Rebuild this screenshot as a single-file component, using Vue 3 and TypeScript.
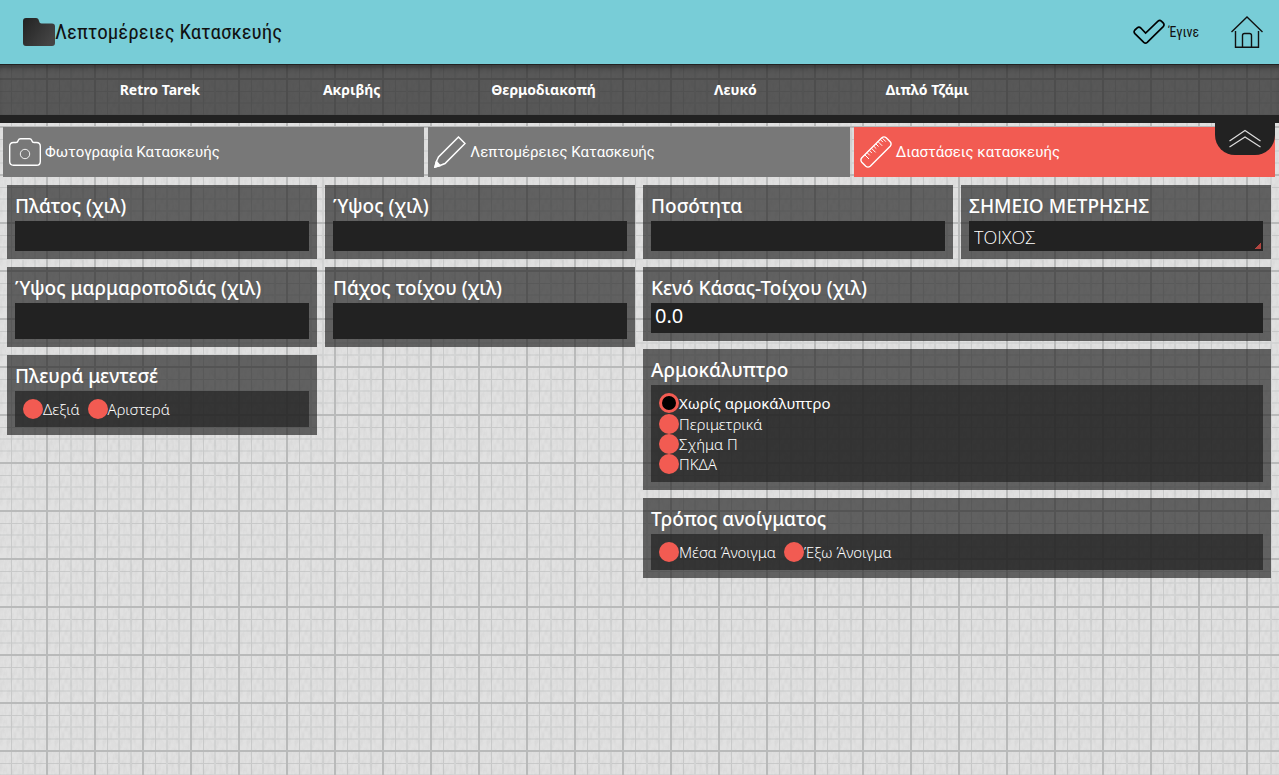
<script setup lang="ts">
import { ref } from 'vue'

const summary: string[] = ['Retro Tarek', 'Ακριβής', 'Θερμοδιακοπή', 'Λευκό', 'Διπλό Τζάμι']
const width = ref('')
const height = ref('')
const sillHeight = ref('')
const wallThickness = ref('')
const quantity = ref('')
const gap = ref('0.0')
const measurePoint = ref('ΤΟΙΧΟΣ')
const hinge = ref('')
const cover = ref('Χωρίς αρμοκάλυπτρο')
const opening = ref('')
const hinges: string[] = ['Δεξιά', 'Αριστερά']
const covers: string[] = ['Χωρίς αρμοκάλυπτρο', 'Περιμετρικά', 'Σχήμα Π', 'ΠΚΔΑ']
const openings: string[] = ['Μέσα Άνοιγμα', 'Έξω Άνοιγμα']
</script>

<template>
  <div class="page">
    <header class="top">
      <svg class="folder" width="32" height="28" viewBox="0 0 32 28" aria-hidden="true">
        <defs>
          <linearGradient id="folderFill" x1="0" y1="0" x2="1" y2="0.6">
            <stop offset="0" stop-color="#222" />
            <stop offset="1" stop-color="#444" />
          </linearGradient>
        </defs>
        <path d="M3 0H13Q15.500 0 16 3Q16.500 5.500 18.500 5.500H29Q32 5.500 32 8.500V25Q32 28 29 28H3Q0 28 0 25V3Q0 0 3 0Z" fill="url(#folderFill)" />
      </svg>
      <h1>Λεπτομέρειες Κατασκευής</h1>
      <button class="done" type="button">
        <svg width="32" height="32" viewBox="0 0 32 32" aria-hidden="true">
          <path d="M1.900 14L4.200 11.900Q6 10.400 7.800 12L12.600 17L25 5.200Q26.800 3.700 28.600 5.300L30.200 6.900Q31.800 8.700 30.200 10.600L14.200 26.300Q12.500 27.800 10.800 26.300L1.900 17.600Q0.300 15.800 1.900 14Z" fill="none" stroke="#000" stroke-width="1.700" />
        </svg>
        <span>Έγινε</span>
      </button>
      <button class="home" type="button" aria-label="Αρχική">
        <svg width="32" height="32" viewBox="0 0 32 32" fill="none" stroke="#111" stroke-width="1.400" aria-hidden="true">
          <path d="M0.500 16L16 1L31.500 16" />
          <path d="M4.500 15V31.200H27.500V15" />
          <path d="M11.500 31V19.500Q11.500 17.500 13.500 17.500H18.500Q20.500 17.500 20.500 19.500V31" />
        </svg>
      </button>
    </header>

    <section class="summary">
      <span v-for="item in summary" :key="item">{{ item }}</span>
      <button class="collapse" type="button" aria-label="Σύμπτυξη">
        <svg width="32" height="20" viewBox="0 0 32 20" fill="none" stroke="#ddd" stroke-width="1.200" aria-hidden="true">
          <path d="M0.500 12L16 1.500L31.500 12M0.500 18L16 8L31.500 18" />
        </svg>
      </button>
    </section>

    <nav class="tabs">
      <button type="button">
        <svg width="32" height="32" viewBox="0 0 32 32" fill="none" stroke="#fff" stroke-width="1.400" aria-hidden="true">
          <path d="M4.500 6.500H7Q8.600 6.500 9 5L9.300 4.200Q9.900 2.700 11.500 2.700H20.500Q22.100 2.700 22.700 4.200L23 5Q23.400 6.500 25 6.500H27.500Q31.300 6.500 31.300 10.300V25.500Q31.300 29.300 27.500 29.300H4.500Q0.700 29.300 0.700 25.500V10.300Q0.700 6.500 4.500 6.500Z" />
          <circle cx="16" cy="18" r="4.700" stroke-width="0.900" />
        </svg>
        <span>Φωτογραφία Κατασκευής</span>
      </button>
      <button type="button">
        <svg width="32" height="32" viewBox="0 0 32 32" fill="none" stroke="#fff" stroke-width="1.500" aria-hidden="true">
          <path d="M24.500 1L31 7.500L11 27.500L6 29.500L1 31L2.200 26L4.500 21Z" />
          <path d="M1 31L2.500 25.500L6 29.500Z" fill="#fff" />
        </svg>
        <span>Λεπτομέρειες Κατασκευής</span>
      </button>
      <button type="button" class="active">
        <svg width="32" height="32" viewBox="0 0 32 32" fill="none" stroke="#fff" stroke-width="1.400" aria-hidden="true">
          <path d="M1.800 21.800L21.800 1.800Q24 0 26.200 1.800L30.200 5.800Q32 8 30.200 10.200L10.200 30.200Q8 32 5.800 30.200L1.800 26.200Q0 24 1.800 21.800Z" />
          <path stroke-width="1" d="M4.800 18.800L9 23M7 16.600L9.700 19.300M9.200 14.400L11.900 17.100M11.400 12.200L15.600 16.400M13.600 10L16.300 12.700M15.800 7.800L18.500 10.500M18 5.600L22.200 9.800M20.200 3.400L22.900 6.100M22.400 2.200L25.900 5.700" />
        </svg>
        <span>Διαστάσεις κατασκευής</span>
      </button>
    </nav>

    <main class="form">
      <div class="group">
        <div class="panel">
          <label for="width">Πλάτος (χιλ)</label>
          <input id="width" v-model="width" type="text" />
        </div>
        <div class="panel">
          <label for="height">Ύψος (χιλ)</label>
          <input id="height" v-model="height" type="text" />
        </div>
        <div class="panel">
          <label for="sill">Ύψος μαρμαροποδιάς (χιλ)</label>
          <input id="sill" v-model="sillHeight" class="tall" type="text" />
        </div>
        <div class="panel">
          <label for="wall">Πάχος τοίχου (χιλ)</label>
          <input id="wall" v-model="wallThickness" class="tall" type="text" />
        </div>
        <fieldset class="panel">
          <legend>Πλευρά μεντεσέ</legend>
          <div class="options">
            <label v-for="item in hinges" :key="item">
              <input v-model="hinge" type="radio" name="hinge" :value="item" /><span>{{ item }}</span>
            </label>
          </div>
        </fieldset>
      </div>

      <div class="group">
        <div class="panel">
          <label for="quantity">Ποσότητα</label>
          <input id="quantity" v-model="quantity" type="text" />
        </div>
        <div class="panel">
          <label for="point">ΣΗΜΕΙΟ ΜΕΤΡΗΣΗΣ</label>
          <select id="point" v-model="measurePoint">
            <option>ΤΟΙΧΟΣ</option>
          </select>
        </div>
        <div class="panel wide">
          <label for="gap">Κενό Κάσας-Τοίχου (χιλ)</label>
          <input id="gap" v-model="gap" type="text" />
        </div>
        <fieldset class="panel wide">
          <legend>Αρμοκάλυπτρο</legend>
          <div class="options stacked">
            <label v-for="item in covers" :key="item" :class="{ chosen: cover === item }">
              <input v-model="cover" type="radio" name="cover" :value="item" /><span>{{ item }}</span>
            </label>
          </div>
        </fieldset>
        <fieldset class="panel wide">
          <legend>Τρόπος ανοίγματος</legend>
          <div class="options">
            <label v-for="item in openings" :key="item">
              <input v-model="opening" type="radio" name="opening" :value="item" /><span>{{ item }}</span>
            </label>
          </div>
        </fieldset>
      </div>
    </main>
  </div>
</template>

<style>
body {
  background-color: #e1e1e1;
  background-image:
    linear-gradient(90deg, transparent 46px, #b9baba 46px),
    linear-gradient(transparent 46px, #b9baba 46px),
    url("data:image/svg+xml,%3Csvg xmlns='http://www.w3.org/2000/svg' width='48' height='48'%3E%3Cfilter id='n' x='0' y='0' width='100%25' height='100%25'%3E%3CfeTurbulence type='fractalNoise' baseFrequency='.3 .12' numOctaves='2' stitchTiles='stitch'/%3E%3CfeColorMatrix values='0 0 0 0 .5 0 0 0 0 .5 0 0 0 0 .5 .5 0 0 0 -.18'/%3E%3C/filter%3E%3Crect width='48' height='48' filter='url(%23n)'/%3E%3C/svg%3E"),
    linear-gradient(90deg, transparent 11px, #c9caca 11px, #c9caca 12px, transparent 12px, transparent 22px, #d3d4d4 22px, #d3d4d4 24px, transparent 24px, transparent 34px, #d3d4d4 34px, #d3d4d4 36px, transparent 36px),
    linear-gradient(transparent 11px, #c9caca 11px, #c9caca 12px, transparent 12px, transparent 22px, #d5d6d6 22px, #d5d6d6 24px, transparent 24px, transparent 34px, #d5d6d6 34px, #d5d6d6 36px, transparent 36px);
  background-size: 48px 48px;
  background-position: 0 32px;
}
</style>

<style scoped>
.page {
  font-family: "Noto Sans", "Open Sans", sans-serif;
  color: #fff;
}
button {
  margin: 0;
  padding: 0;
  border: 0;
  background: none;
  font: inherit;
  color: inherit;
}
svg {
  display: block;
  flex: none;
}
.top {
  display: flex;
  align-items: center;
  height: 64px;
  padding: 0 16px 0 23px;
  background: #78cdd7;
  border-bottom: 1px solid #222;
  color: #111;
}
h1 {
  flex: 1;
  margin: 0;
  font-family: "Roboto Condensed", "Noto Sans Condensed", "Liberation Sans Narrow", Roboto, sans-serif;
  font-size: 21px;
  font-weight: 400;
  line-height: 32px;
}
.top .done {
  display: flex;
  align-items: center;
  gap: 4px;
  margin-right: 32px;
  font-family: "Roboto Condensed", "Noto Sans Condensed", "Liberation Sans Narrow", Roboto, sans-serif;
  font-size: 14px;
}
.summary {
  position: relative;
  display: flex;
  height: 50px;
  padding: 0 20% 0 5%;
  background: rgba(34, 34, 34, 0.72);
  border-bottom: 8px solid #222;
  box-shadow: inset 0 6px 6px -4px rgba(0, 0, 0, 0.4);
}
.summary span {
  flex: 1;
  text-align: center;
  font-size: 14px;
  font-weight: 700;
  line-height: 50px;
}
.collapse {
  position: absolute;
  top: 58px;
  right: 4px;
  display: flex;
  justify-content: center;
  width: 60px;
  height: 32px;
  padding-top: 6px;
  background: #222;
  border-radius: 0 0 20px 20px;
}
.tabs {
  display: flex;
  gap: 4px;
  padding: 4px 4px 0 3px;
}
.tabs button {
  flex: 1;
  display: flex;
  align-items: center;
  gap: 4px;
  height: 50px;
  padding: 0 6px;
  background: #787878;
  font-family: Roboto, "Noto Sans", sans-serif;
  font-size: 15px;
}
.tabs .active {
  background: #f25b52;
}
.form {
  display: grid;
  grid-template-columns: 1fr 1fr;
  align-items: start;
  gap: 8px;
  padding: 8px 8px 8px 7px;
}
.group {
  display: grid;
  grid-template-columns: 1fr 1fr;
  gap: 8px;
}
.panel {
  min-width: 0;
  margin: 0;
  padding: 8px;
  border: 0;
  background: rgba(34, 34, 34, 0.67);
}
.wide {
  grid-column: span 2;
}
.panel > label,
legend {
  display: block;
  float: left;
  width: 100%;
  padding: 0;
  font-size: 19px;
  font-weight: 500;
  line-height: 26px;
  height: 28px;
  white-space: nowrap;
}
.panel > input,
select {
  display: block;
  box-sizing: border-box;
  width: 100%;
  height: 30px;
  margin: 0;
  padding: 0 4px 5px;
  border: 0;
  border-radius: 0;
  background: #222;
  color: #fff;
  font-family: inherit;
  font-size: 20px;
}
.panel > .tall {
  height: 36px;
}
select {
  appearance: none;
  padding: 2px 5px 0;
  font-family: "Open Sans", "Noto Sans", sans-serif;
  font-size: 18px;
  font-weight: 300;
  background: linear-gradient(135deg, transparent 50%, #b0443f 50%) right 2px bottom 2px / 7px 7px no-repeat #222;
}
.options {
  clear: both;
  display: flex;
  gap: 8px;
  padding: 8px;
  background: rgba(34, 34, 34, 0.7);
  font-family: "Noto Sans", "Open Sans", sans-serif;
  font-size: 15px;
  font-weight: 300;
}
.options label {
  display: flex;
  align-items: center;
  height: 20px;
}
.stacked {
  flex-direction: column;
  gap: 0;
}
.options .chosen {
  align-items: flex-start;
  height: 21px;
  line-height: 20px;
  font-weight: 400;
}
.options input {
  appearance: none;
  box-sizing: border-box;
  width: 20px;
  height: 20px;
  margin: 0;
  border-radius: 50%;
  background: #f25b52;
}
.options input:checked {
  background: #000;
  border: 3px solid #f25b52;
}
</style>
